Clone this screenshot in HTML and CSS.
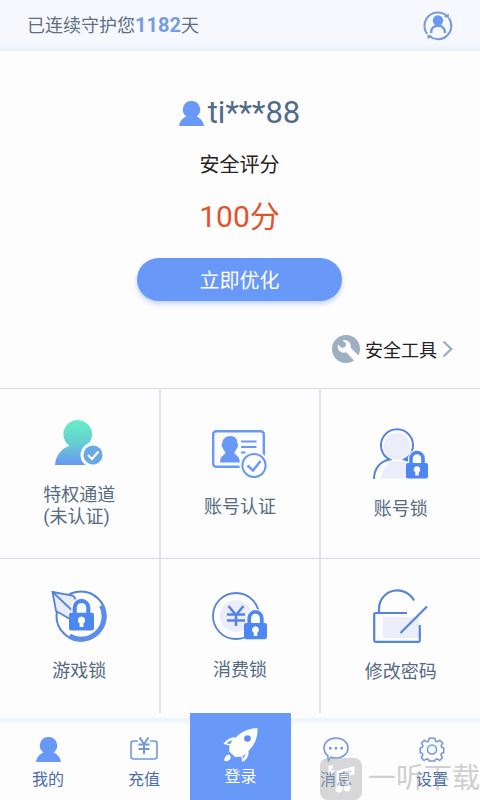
FILE: index.html
```html
<!DOCTYPE html>
<html lang="zh-CN">
<head>
<meta charset="utf-8">
<meta name="viewport" content="width=device-width, initial-scale=1">
<title>账号安全</title>
<link rel="stylesheet" href="styles.css">
</head>
<body>
<svg class="defs" aria-hidden="true">
  <defs>
    <linearGradient id="mint" x1="0" y1="0" x2="0" y2="1">
      <stop offset="0" stop-color="#66efc4"/>
      <stop offset="0.5" stop-color="#66cfd2"/>
      <stop offset="1" stop-color="#6796f2"/>
    </linearGradient>
    <symbol id="person" viewBox="0 0 25 25">
      <path d="M12.5 0a8.6 8.6 0 0 1 5 15.6C21.5 17 24.2 20.500 25 25H0c.8-4.500 3.500-8 7.500-9.400A8.600 8.600 0 0 1 12.500 0z" fill="#6899f8"/>
    </symbol>
    <symbol id="padlock" viewBox="0 0 22 29">
      <path d="M5 14V8.500a6 6 0 0 1 12 0V14" fill="none" stroke="#fdfdfd" stroke-width="6"/>
      <path d="M5 14V8.500a6 6 0 0 1 12 0V14" fill="#fdfdfd" stroke="#4d87f2" stroke-width="3.600"/>
      <rect x="0" y="13" width="22" height="15.500" rx="2" fill="#4d87f2"/>
      <path d="M11 16.200a3.300 3.300 0 0 1 1.700 6.100V25.500h-3.400v-3.200A3.300 3.300 0 0 1 11 16.200z" fill="#fff"/>
    </symbol>
  </defs>
</svg>
<div class="app">
  <header class="topbar">
    <p class="guard">已连续守护您<strong>1182</strong>天</p>
    <button class="switch" type="button" aria-label="切换账号">
      <svg width="30" height="30" viewBox="0 0 30 30" fill="none" stroke="#789bdc" stroke-width="2">
        <path d="M4.200 23A13.400 13.400 0 0 1 23.800 4.900"/>
        <path d="M25.800 7A13.400 13.400 0 0 1 6.800 25.500"/>
        <path d="M25.800 2.500v4.500l-5-1zM4.500 28.300v-4.500l5 1z" fill="#789bdc" stroke="none"/>
        <circle cx="15" cy="9.500" r="5.200" fill="#6899f8" stroke="none"/>
        <path d="M8.200 22v-1.500a6.800 5.800 0 0 1 13.600 0V22" stroke-width="2.400"/>
      </svg>
    </button>
  </header>

  <main class="content">
    <section class="hero">
      <h1 class="account"><svg width="25" height="25"><use href="#person"/></svg><span>ti***88</span></h1>
      <p class="score-label">安全评分</p>
      <p class="score">100分</p>
      <button class="optimize" type="button">立即优化</button>
      <a class="tools" href="#tools">
        <svg width="28" height="28" viewBox="0 0 28 28">
          <circle cx="14" cy="14" r="14" fill="#9eafc2"/>
          <path d="M6 9.500l3.600 3.600 3.600-1 1-3.400L10.700 5.200C15.500 3.800 20 8 18.700 12.800l9 9-4.600 4.700-9-9.200C9 19.200 4.400 14.500 6 9.500z" fill="#fdfdfd"/>
        </svg>
        <span>安全工具</span>
        <svg width="11" height="18" viewBox="0 0 11 18"><path d="M1.500 1.500L9.300 9l-7.800 7.500" fill="none" stroke="#9cafc3" stroke-width="2.400"/></svg>
      </a>
    </section>

    <nav class="grid" aria-label="安全功能">
      <a class="cell" href="#privilege">
        <svg width="48" height="46" viewBox="0 0 48 46">
          <path d="M22.500 0a14.300 14.300 0 0 1 8.500 26c4 2 7 5 9 9v10H0c.6-9 6.500-17 14.500-19A14.300 14.300 0 0 1 22.500 0z" fill="url(#mint)"/>
          <circle cx="38" cy="35" r="12.500" fill="#fdfdfd"/>
          <circle cx="38" cy="35" r="9.500" fill="#68a8e4"/>
          <path d="M33 35l4 4 6.500-7.500" fill="none" stroke="#fff" stroke-width="2.200"/>
        </svg>
        <span>特权通道<br>(未认证)</span>
      </a>
      <a class="cell" href="#verify">
        <svg width="55" height="48" viewBox="0 0 55 48">
          <rect x="1.200" y="1.200" width="50.600" height="35.600" rx="3" fill="none" stroke="#6899f8" stroke-width="2.400"/>
          <path d="M18.500 6c4.500 0 7 3 7 7.500 1 .3.800 4-.5 4.200-.6 2-1.500 3.300-2.600 4.300.2 4 5.400 2.500 5.400 10.500H8c0-8 5.200-6.500 5.400-10.500-1.100-1-2-2.300-2.600-4.300-1.300-.2-1.500-3.900-.5-4.200C10.300 9 14 6 18.500 6z" fill="#6899f8"/>
          <path d="M29 11.500h15.500M29 17h15.500M29 22.500h4.500" stroke="#6899f8" stroke-width="2"/>
          <circle cx="42" cy="35.500" r="14.500" fill="#fdfdfd"/>
          <circle cx="42" cy="35.500" r="11.600" fill="#fdfdfd" stroke="#6899f8" stroke-width="2"/>
          <path d="M35.500 35.500l5.500 5 7.500-9.500" fill="none" stroke="#6899f8" stroke-width="2.400"/>
        </svg>
        <span>账号认证</span>
      </a>
      <a class="cell" href="#account-lock">
        <svg width="55" height="52" viewBox="0 0 55 52">
          <circle cx="24" cy="18.500" r="13.500" fill="#ebedfa"/>
          <path d="M8 50.500c1-8 5-15 12-17h10c4 1 7 3 9 6v11z" fill="#ebedfa"/>
          <path d="M1 51c0-9 5-17.500 15.500-19.500A16 16 0 1 1 31.500 31.500l6 2" fill="none" stroke="#5584d8" stroke-width="2"/>
          <path d="M31 31l7-5v9z" fill="#4d87f2"/>
          <use href="#padlock" x="33" y="22" width="22" height="29"/>
        </svg>
        <span>账号锁</span>
      </a>
      <a class="cell" href="#game-lock">
        <svg width="56" height="52" viewBox="0 0 56 52">
          <circle cx="30" cy="26" r="24.500" fill="none" stroke="#5584d8" stroke-width="2"/>
          <path d="M50.500 15.500A23 23 0 0 1 18.500 46" fill="none" stroke="#5b8cee" stroke-width="5"/>
          <path d="M1.500 2l20 3.500c3 2 4.500 6 5 11L19 29 5 21z" fill="#e9edfb" stroke="#5584d8" stroke-width="1.800"/>
          <path d="M1.500 2L26 25" fill="none" stroke="#5584d8" stroke-width="1.800"/>
          <use href="#padlock" x="18" y="8" width="25" height="33"/>
        </svg>
        <span>游戏锁</span>
      </a>
      <a class="cell" href="#pay-lock">
        <svg width="55" height="49" viewBox="0 0 55 49">
          <circle cx="24" cy="24" r="23" fill="none" stroke="#5584d8" stroke-width="1.800"/>
          <circle cx="24" cy="24" r="16" fill="#ebedfa"/>
          <path d="M16.500 14l7.500 9 7.500-9M15 22.500h18M15 28.500h18M24 22v12" fill="none" stroke="#5584e4" stroke-width="2.600"/>
          <use href="#padlock" x="32" y="17" width="23" height="31"/>
        </svg>
        <span>消费锁</span>
      </a>
      <a class="cell" href="#password">
        <svg width="55" height="54" viewBox="0 0 55 54">
          <rect x="10" y="28" width="36" height="21" fill="#ebedfa"/>
          <path d="M34 24H2.500Q1.200 24 1.200 25.300v26.200q0 1.300 1.300 1.300h43q1.300 0 1.300-1.300V36M6 24v-5A18.500 18.500 0 0 1 41 11.500M27.500 44L54 17.500" fill="none" stroke="#5584d8" stroke-width="2.200"/>
        </svg>
        <span>修改密码</span>
      </a>
    </nav>
  </main>

  <nav class="tabs" aria-label="主导航">
    <a class="tab" href="#me"><svg width="25" height="25"><use href="#person"/></svg><span>我的</span></a>
    <a class="tab" href="#recharge">
      <svg width="28" height="25" viewBox="0 0 28 25" fill="none" stroke="#7099dc" stroke-width="1.600">
        <path d="M8 4H3.500Q1 4 1 6.500v13Q1 22 3.500 22h21q2.500 0 2.500-2.500v-13Q27 4 24.500 4H20"/>
        <path d="M9.500.5L14 7l4.500-6.500M8.500 7.500h11M8.500 12h11M14 7v10" stroke-width="2"/>
      </svg>
      <span>充值</span>
    </a>
    <a class="tab active" href="#login" aria-current="page">
      <svg width="36" height="35" viewBox="0 0 36 35" fill="#fff">
        <path d="M34.500.2C25 .5 17.500 4 13 9.500 8 9.200 3.500 11 .5 16l6 1.500-.3 6 6 5.500 6-.2 1.300 5.200c5-2.500 6.500-6.500 6-11C31.500 17 35 9.500 34.500.2z"/>
        <path d="M3.500 15.300l4.500-3 1 1-2 3zM19.800 31l-.3-3 3.500-2z" fill="#6899f8"/>
        <circle cx="24.500" cy="10.500" r="3.300" fill="#5b8cee"/>
        <path d="M6 26.500c2.500 2 2.200 4.800-.8 6.200-1.200.6-2.500.7-3.700.4-.6-3 1.300-6 4.500-6.600z"/>
      </svg>
      <span>登录</span>
    </a>
    <a class="tab" href="#messages">
      <svg width="26" height="25" viewBox="0 0 26 25">
        <path d="M13 1c7 0 12 4.300 12 10s-5 10-12 10c-2 0-3.700-.2-5.200-.8L5.500 24l-.8-5.500C2.300 16.600 1 14 1 11 1 5.300 6 1 13 1z" fill="none" stroke="#7099dc" stroke-width="1.600"/>
        <path d="M6 10h2.500v2.500H6zM11.700 10h2.500v2.500h-2.500zM17.500 10H20v2.500h-2.500z" fill="#6899f8"/>
      </svg>
      <span>消息</span>
    </a>
    <a class="tab" href="#settings">
      <svg width="26" height="25" viewBox="0 0 26 26" fill="none" stroke="#7099dc" stroke-width="1.600" stroke-linejoin="round">
        <path d="M10 1.200h6l.8 3.200 1.600.7 2.800-1.700 3 3-1.700 2.800.7 1.600 2 .4v5.200l-2.200.6-.7 1.600 1.700 2.800-3 3-2.800-1.700-1.600.7-.6 1.600h-6l-.6-1.600-1.800-.7L4.800 24.400l-3-3 1.700-2.800-.7-1.600-2-.6v-5.200l2-.4.9-1.600L2 6.400l3-3 2.800 1.700 1.600-.7z"/>
        <circle cx="13" cy="13" r="4.700"/>
      </svg>
      <span>设置</span>
    </a>
    <div class="watermark">
      <svg width="42" height="42" viewBox="0 0 42 42">
        <rect width="42" height="42" rx="8" fill="#aaa"/>
        <path d="M13 9h-3v5h5M18 30V14l15-4v5l-15 4" fill="none" stroke="#fff" stroke-width="3"/>
        <path d="M28 15v14" stroke="#fff" stroke-width="3"/>
        <circle cx="19" cy="31" r="3.500" fill="#fff"/><circle cx="27" cy="30" r="3.500" fill="#fff"/>
      </svg>
      <span>一听下载</span>
    </div>
  </nav>
</div>
</body>
</html>
```
FILE: styles.css
```css
* {
  box-sizing: border-box;
}

body {
  margin: 0;
  background: #fdfdfd;
  color: #222;
  font-family: Roboto, "Noto Sans CJK SC", sans-serif;
  font-size: 18px;
}

h1,
p {
  margin: 0;
  font-weight: 400;
}

a {
  color: inherit;
  text-decoration: none;
}

button {
  border: 0;
  padding: 0;
  background: none;
  font: inherit;
}

svg {
  display: block;
  flex: none;
}

.defs {
  position: absolute;
  width: 0;
  height: 0;
}

.app {
  display: flex;
  flex-direction: column;
  min-height: 100vh;
}

.topbar {
  display: flex;
  align-items: center;
  justify-content: space-between;
  height: 51px;
  padding: 0 27px;
  background: linear-gradient(#f7f8fd 84%, #e8f1fb);
}

.guard {
  color: #5c6f85;
  line-height: 24px;
}

.guard strong {
  color: #759de4;
  font-size: 20px;
}

.content {
  display: flex;
  flex: 1;
  flex-direction: column;
}

.hero {
  display: flex;
  flex-direction: column;
  align-items: center;
  padding: 44px 27px 25px 26px;
}

.account {
  display: flex;
  align-items: center;
  gap: 4px;
  color: #516b88;
  font-size: 31px;
  line-height: 36px;
}

.score-label {
  margin-top: 22px;
  font-size: 20px;
  line-height: 24px;
}

.score {
  margin-top: 22px;
  color: #e2532c;
  font-size: 30px;
  line-height: 36px;
}

.optimize {
  width: 205px;
  height: 43px;
  margin-top: 23px;
  border-radius: 22px;
  background: #6899f8;
  box-shadow: 0 3px 5px #c3d5fa;
  color: #fff;
  font-size: 20px;
}

.tools {
  display: flex;
  align-items: center;
  align-self: flex-end;
  gap: 5px;
  height: 28px;
  margin-top: 34px;
}

.grid {
  display: grid;
  flex: 1;
  grid-template-columns: repeat(3, 1fr);
  grid-template-rows: 170px minmax(155px, 1fr);
  column-gap: 2px;
  background: #e1e1f1;
}

.cell {
  display: flex;
  flex-direction: column;
  align-items: center;
  justify-content: center;
  gap: 18px;
  border-top: 1px solid #d9d9ef;
  background: #fdfdfd;
  color: #566a80;
  line-height: 22px;
}

.tabs {
  position: relative;
  display: grid;
  grid-template-columns: repeat(5, 1fr);
  height: 82px;
  margin-top: 5px;
  background: linear-gradient(#eaf2fc, #fdfdfd 8px);
}

.tab {
  display: flex;
  flex-direction: column;
  align-items: center;
  gap: 7px;
  padding-top: 19px;
  color: #4c6caa;
  font-size: 16px;
  line-height: 22px;
}

.tab.active {
  gap: 3px;
  margin: -5px -3px 0 -2px;
  padding-top: 15px;
  background: #6899f8;
  color: #fff;
}

.watermark {
  position: absolute;
  right: 0;
  bottom: 0;
  display: flex;
  align-items: center;
  gap: 6px;
  color: #999;
  font-size: 28px;
  line-height: 42px;
  opacity: 0.45;
  pointer-events: none;
}
```
